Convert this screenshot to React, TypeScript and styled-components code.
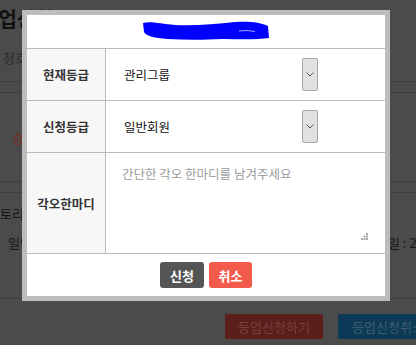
import styled, { createGlobalStyle } from 'styled-components';

// ----------------------------------------------------------------------

const GlobalStyle = createGlobalStyle`
  html, body {
    margin: 0;
    padding: 0;
    background: #4b4b4b;
  }

  * {
    box-sizing: border-box;
  }

  body {
    font-family: 'Noto Sans CJK KR', 'Noto Sans', sans-serif;
  }
`;

const KR = `'Noto Sans CJK KR', 'Noto Sans', sans-serif`;

// ---- dimmed page behind the modal -------------------------------------

const Page = styled.div`
  position: relative;
  width: 416px;
  height: 345px;
  overflow: hidden;
  background: #4b4b4b;
  font-family: ${KR};
`;

const PageHeader = styled.div`
  height: 81px;
  padding-top: 6px;
  white-space: nowrap;
`;

const PageTitle = styled.h2`
  margin: 0 0 0 -20px;
  font-size: 20px;
  line-height: 26px;
  font-weight: 700;
  color: #111;
`;

const PageSub = styled.p`
  margin: 17px 0 0 3px;
  font-size: 13px;
  line-height: 18px;
  color: #2c2c2c;
`;

const Band = styled.div`
  height: 12px;
  border-top: 1px solid #3e3e3e;
  border-bottom: 1px solid #3e3e3e;
`;

const StatusSection = styled.div`
  display: flex;
  align-items: center;
  height: 88px;
  padding-left: 12px;
  font-size: 13px;
  color: #7a2c22;
  white-space: nowrap;
`;

const InfoSection = styled.div`
  height: 106px;
  padding-top: 12px;
  border-bottom: 1px solid #3e3e3e;
  font-size: 13px;
  color: #161616;
  white-space: nowrap;
`;

const InfoLine = styled.div<{ indent: number }>`
  display: grid;
  grid-template-columns: ${({ indent }) => 388 - indent}px auto;
  padding-left: ${({ indent }) => indent}px;
  line-height: 18px;

  & + & {
    margin-top: 11px;
  }
`;

const LinkText = styled.span`
  color: #26384e;
`;

const PageButtons = styled.div`
  display: flex;
  gap: 15px;
  padding: 15px 0 0 225px;
  white-space: nowrap;
`;

const PageButton = styled.span<{ tone: 'red' | 'blue' }>`
  display: inline-flex;
  align-items: center;
  justify-content: center;
  flex-shrink: 0;
  width: ${({ tone }) => (tone === 'red' ? 98 : 100)}px;
  height: 25px;
  border-radius: 2px;
  font-size: 13px;
  background: ${({ tone }) => (tone === 'red' ? '#5b1e1b' : '#0c3a56')};
  color: ${({ tone }) => (tone === 'red' ? '#74413b' : '#3f5c72')};
`;

// ---- modal ------------------------------------------------------------

const Modal = styled.div`
  position: absolute;
  top: 10px;
  left: 22px;
  width: 368px;
  border: 5px solid #bdbdbd;
  background: #fff;
  font-family: ${KR};
`;

const ModalTitle = styled.div`
  display: flex;
  align-items: center;
  justify-content: center;
  height: 34px;
  padding-bottom: 1px;
  border-bottom: 1px solid #bbb;
`;

const FormRow = styled.div<{ tall?: boolean }>`
  display: flex;
  height: ${({ tall }) => (tall ? 101 : 52)}px;
  border-bottom: 1px solid #bbb;
`;

const Label = styled.div`
  display: flex;
  align-items: center;
  justify-content: center;
  flex-shrink: 0;
  width: 79px;
  border-right: 1px solid #bbb;
  background: #f7f7f7;
  font-size: 12.5px;
  font-weight: 700;
  color: #333;
`;

const Value = styled.div`
  position: relative;
  display: flex;
  align-items: center;
  flex: 1;
`;

const Select = styled.div`
  display: flex;
  align-items: center;
  justify-content: space-between;
  width: 212px;
  padding-left: 18px;
  font-size: 12.5px;
  color: #111;
`;

const SelectArrow = styled.span`
  display: flex;
  align-items: center;
  justify-content: center;
  width: 16px;
  height: 33px;
  border: 1px solid #a9a9a9;
  border-radius: 2px;
  background: #e1e1e1;
`;

const TextArea = styled.textarea`
  width: 100%;
  height: 100%;
  padding: 12px 16px;
  border: none;
  outline: none;
  resize: none;
  font-family: ${KR};
  font-size: 12.5px;
  line-height: 18px;
  color: #333;

  &::placeholder {
    color: #9a9a9a;
  }
`;

const Grip = styled.svg`
  position: absolute;
  right: 17px;
  bottom: 13px;
`;

const ModalFooter = styled.div`
  display: flex;
  justify-content: center;
  gap: 5px;
  height: 42px;
  padding-top: 8px;
`;

const ModalButton = styled.button<{ tone: 'dark' | 'red' }>`
  width: ${({ tone }) => (tone === 'dark' ? 44 : 43)}px;
  height: 26px;
  padding: 0;
  border: none;
  border-radius: 3px;
  background: ${({ tone }) => (tone === 'dark' ? '#555555' : '#f25b4c')};
  font-family: ${KR};
  font-size: 13px;
  font-weight: 700;
  color: #fff;
`;

function Chevron() {
  return (
    <svg width="8" height="5" viewBox="0 0 8 5">
      <path d="M0.5 0.5 L4 4 L7.5 0.5" fill="none" stroke="#555" strokeWidth="1" />
    </svg>
  );
}

function Scribble() {
  return (
    <svg width="126" height="20" viewBox="0 0 126 20">
      <path
        d="M0 2 C8 0 18 3 32 4 C52 5 72 3 92 1 C104 0 118 1 125 5 L126 17 C112 19 96 18 80 18 C60 19 42 19 24 18 C12 17 3 15 1 11 Z"
        fill="#0000ff"
      />
      <path d="M96 10 L104 9.5 L112 10.5" fill="none" stroke="#c8c8ff" strokeWidth="0.8" />
    </svg>
  );
}

function ResizeGrip() {
  return (
    <Grip width="7" height="7" viewBox="0 0 7 7">
      <rect x="5" y="0" width="2" height="2" fill="#aaa" />
      <rect x="2.5" y="2.5" width="2" height="2" fill="#aaa" />
      <rect x="5" y="2.5" width="2" height="2" fill="#aaa" />
      <rect x="0" y="5" width="2" height="2" fill="#aaa" />
      <rect x="2.5" y="5" width="2" height="2" fill="#aaa" />
      <rect x="5" y="5" width="2" height="2" fill="#aaa" />
    </Grip>
  );
}

export default function App() {
  return (
    <>
      <GlobalStyle />
      <Page>
        <PageHeader>
          <PageTitle>등업신청</PageTitle>
          <PageSub>정호님</PageSub>
        </PageHeader>
        <Band />
        <StatusSection>승인대기</StatusSection>
        <Band />
        <InfoSection>
          <InfoLine indent={0}>
            <span>
              토리<LinkText>카</LinkText>
            </span>
          </InfoLine>
          <InfoLine indent={8}>
            <span>일반회원</span>
            <span>일 : 2023-01-01</span>
          </InfoLine>
        </InfoSection>
        <PageButtons>
          <PageButton tone="red">등업신청하기</PageButton>
          <PageButton tone="blue">등업신청취소</PageButton>
        </PageButtons>

        <Modal>
          <ModalTitle>
            <Scribble />
          </ModalTitle>
          <FormRow>
            <Label>현재등급</Label>
            <Value>
              <Select>
                관리그룹
                <SelectArrow>
                  <Chevron />
                </SelectArrow>
              </Select>
            </Value>
          </FormRow>
          <FormRow>
            <Label>신청등급</Label>
            <Value>
              <Select>
                일반회원
                <SelectArrow>
                  <Chevron />
                </SelectArrow>
              </Select>
            </Value>
          </FormRow>
          <FormRow tall>
            <Label>각오한마디</Label>
            <Value>
              <TextArea placeholder="간단한 각오 한마디를 남겨주세요" />
              <ResizeGrip />
            </Value>
          </FormRow>
          <ModalFooter>
            <ModalButton tone="dark">신청</ModalButton>
            <ModalButton tone="red">취소</ModalButton>
          </ModalFooter>
        </Modal>
      </Page>
    </>
  );
}
